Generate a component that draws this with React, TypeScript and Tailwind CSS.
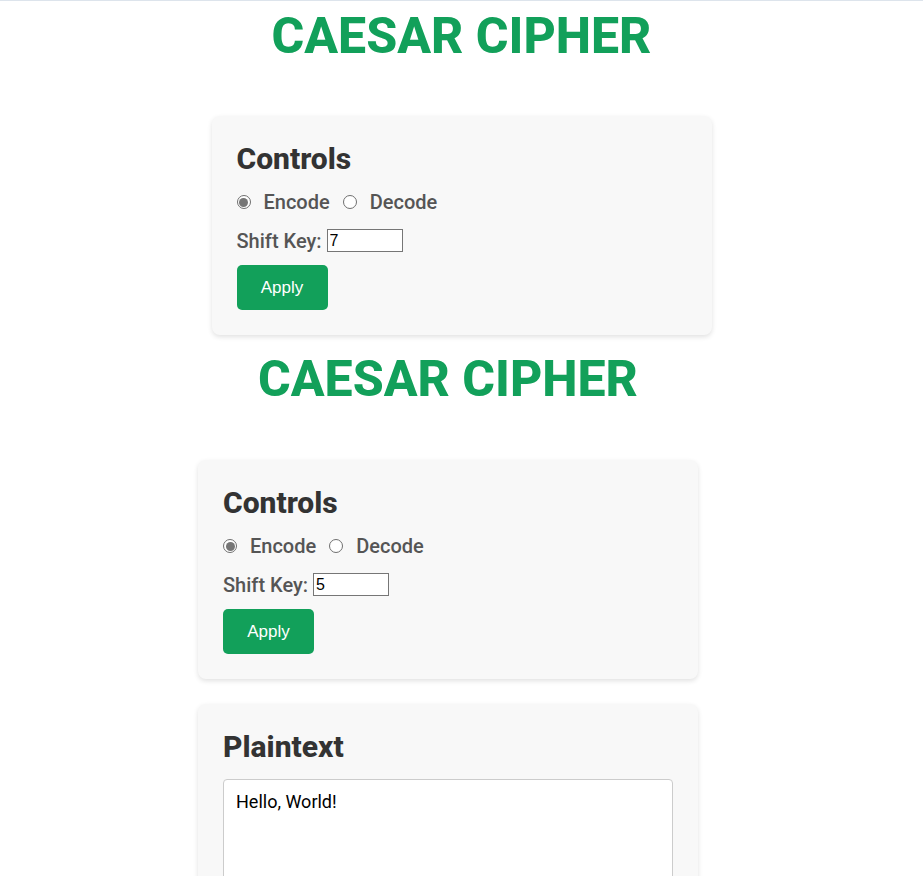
import React from "react"

const font = { fontFamily: "Roboto, 'Noto Sans', sans-serif" }

function Radio({ checked }: { checked?: boolean }) {
  return (
    <span className="w-[14px] h-[14px] rounded-full border border-[#6f6f6f] bg-white flex items-center justify-center shrink-0">
      {checked && <span className="w-[9px] h-[9px] rounded-full bg-[#767676]" />}
    </span>
  )
}

function Controls({ shift }: { shift: string }) {
  return (
    <div className="w-[500px] bg-[#f8f8f8] rounded-lg shadow-[0_2px_5px_rgba(0,0,0,0.12)] p-[25px]">
      <h2 className="text-[30px] leading-[35px] font-extrabold text-[#333]">Controls</h2>

      {/* mode */}
      <div className="mt-[14px] h-[24px] flex items-center text-[20px] font-medium text-[#555]">
        <Radio checked />
        <span className="ml-[13px]">Encode</span>
        <span className="ml-[13px]"><Radio /></span>
        <span className="ml-[13px]">Decode</span>
      </div>

      <div className="mt-[15px] h-[23px] flex items-center text-[20px] font-medium text-[#555]">
        <span>Shift Key:</span>
        <input
          type="text"
          defaultValue={shift}
          className="ml-[5px] w-[76px] h-[23px] border border-[#767676] bg-white px-[2px] text-[16px] font-normal text-black outline-none"
          style={{ fontFamily: "'Liberation Sans', Arial, sans-serif" }}
        />
      </div>

      <button
        className="mt-[13px] w-[91px] h-[45px] rounded-[5px] bg-[#12a05a] text-white text-[17px]"
        style={{ fontFamily: "'Liberation Sans', Arial, sans-serif" }}
      >
        Apply
      </button>
    </div>
  )
}

export default function App() {
  return (
    <div className="min-h-[876px] bg-white border-t border-[#dde4ec] overflow-hidden" style={font}>
      {/* first render */}
      <div className="flex flex-col items-center">
        <h1 className="mt-[5px] text-[50px] leading-[60px] font-extrabold text-[#12a05a]">CAESAR CIPHER</h1>
        <div className="mt-[50px]">
          <Controls shift="7" />
        </div>
      </div>

      {/* second render */}
      <div className="w-[896px] flex flex-col items-center">
        <h1 className="mt-[14px] text-[50px] leading-[60px] font-extrabold text-[#12a05a]">CAESAR CIPHER</h1>
        <div className="mt-[51px]">
          <Controls shift="5" />
        </div>

        <div className="mt-[25px] w-[500px] bg-[#f8f8f8] rounded-lg shadow-[0_2px_5px_rgba(0,0,0,0.12)] p-[25px]">
          <h2 className="text-[30px] leading-[35px] font-extrabold text-[#333]">Plaintext</h2>
          <textarea
            defaultValue="Hello, World!"
            className="mt-[15px] w-full h-[200px] border border-[#ccc] rounded-[4px] bg-white pt-[11px] px-[12px] pb-[12px] text-[18px] leading-[21px] text-black resize-none outline-none"
            style={font}
          />
        </div>
      </div>
    </div>
  )
}
